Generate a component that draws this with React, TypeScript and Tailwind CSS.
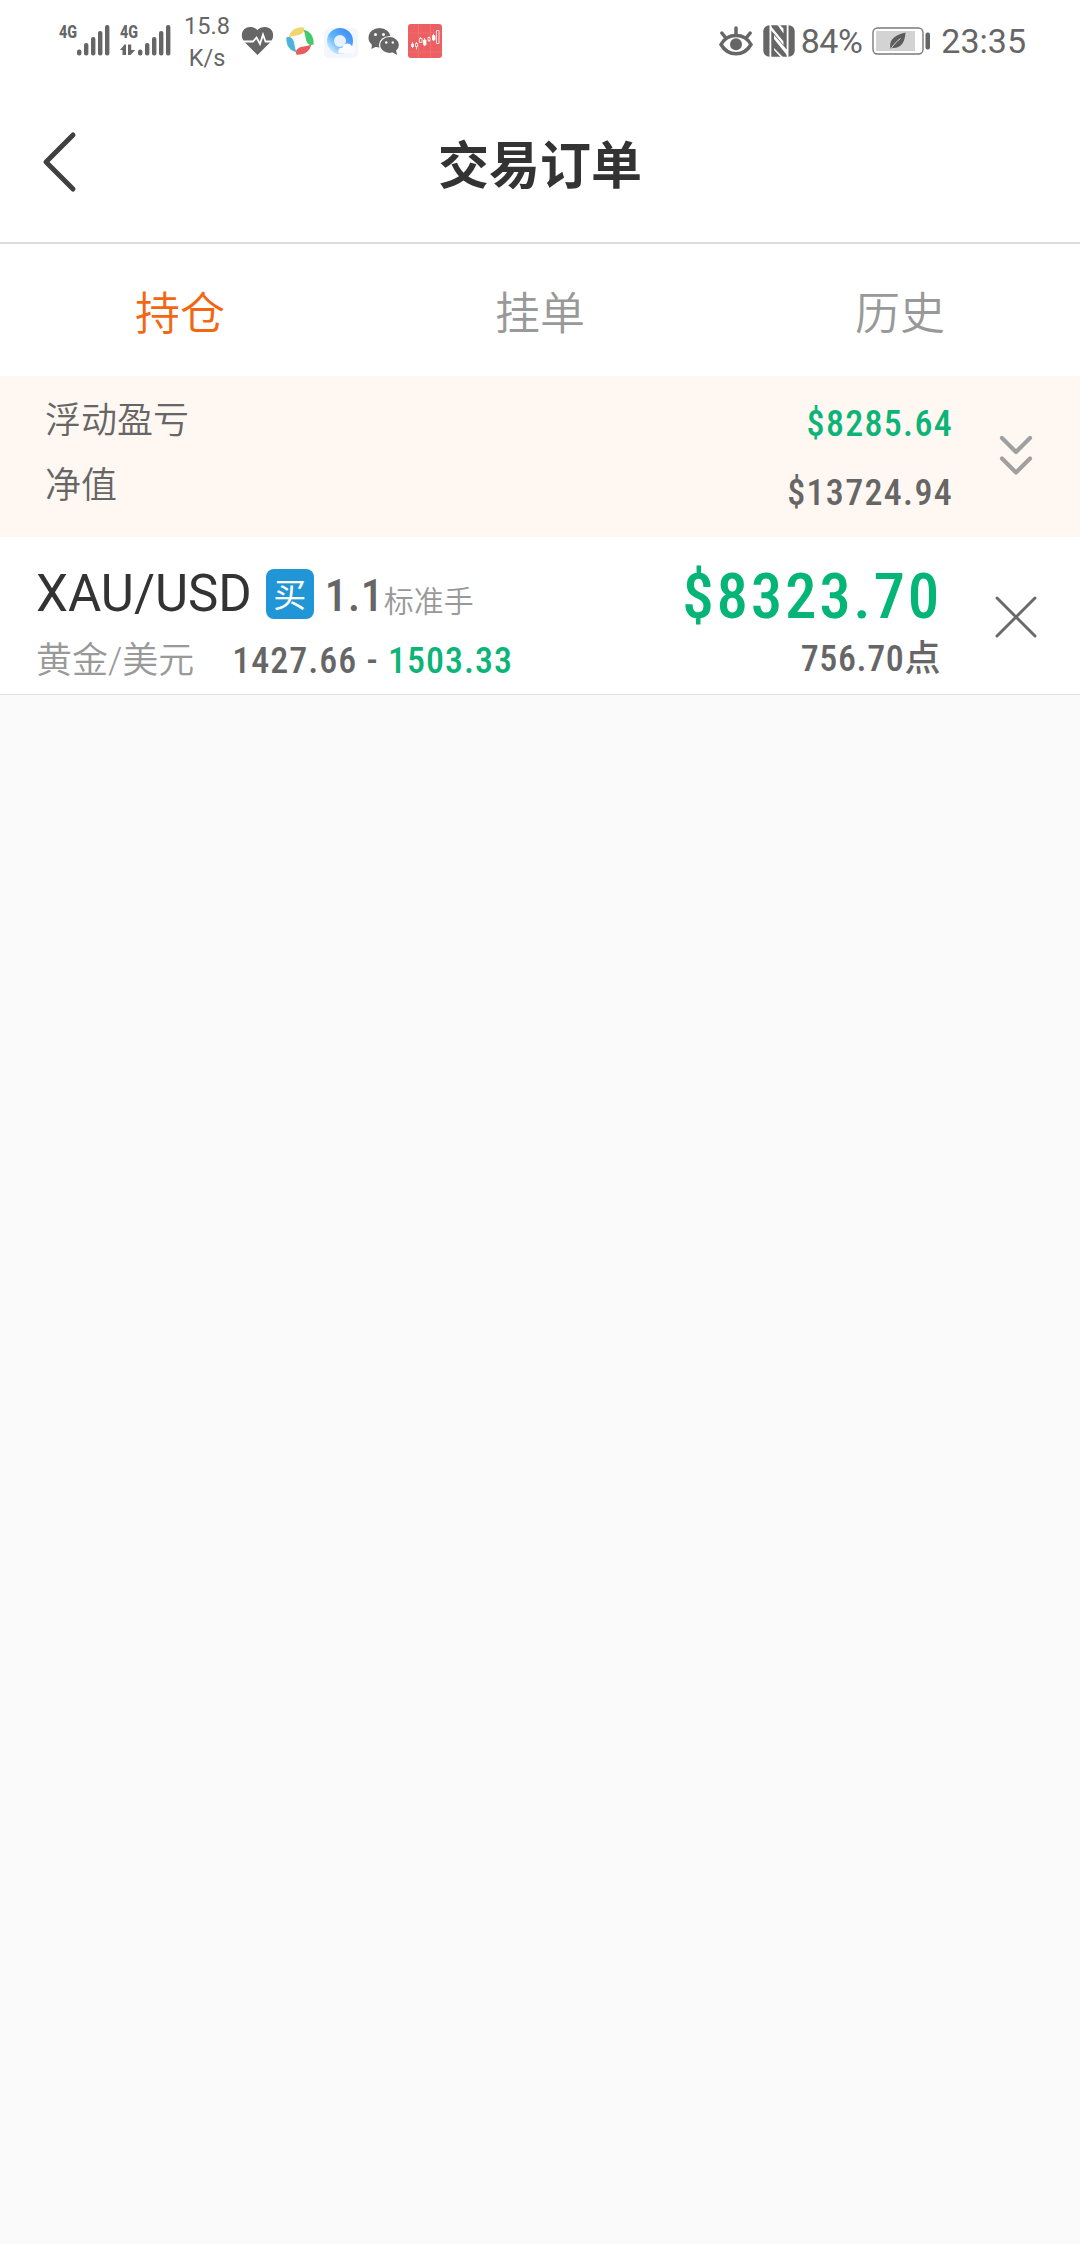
const tabs = ["持仓", "挂单", "历史"];

const signalBars = [
  { x: 21, y: 49.5 },
  { x: 28, y: 43 },
  { x: 35, y: 37 },
  { x: 42, y: 31 },
  { x: 49, y: 25 },
];

function Signal({ data = false }: { data?: boolean }) {
  return (
    <svg className="h-20 w-[61px] shrink-0 fill-[#666]" viewBox="0 0 61 80" aria-hidden="true">
      <text
        x="3"
        y="38"
        fontSize="18.5"
        fontWeight="800"
        textLength="18"
        lengthAdjust="spacingAndGlyphs"
        className="font-['Roboto',sans-serif]"
      >
        4G
      </text>
      {signalBars.map((bar) => (
        <rect key={bar.x} x={bar.x} y={bar.y} width="4.4" height={55.5 - bar.y} rx="2" />
      ))}
      {data && <path d="M3 50 7.500 44.500H9V55H5.500v-5zM11 44.500h3.200V50h4L13.500 55H11z" />}
    </svg>
  );
}

function HeartIcon() {
  return (
    <svg className="h-[30px] w-[33px] shrink-0" viewBox="0 0 33 30" aria-hidden="true">
      <path
        d="M16.500 29 3 15.500C-.5 11 .3 4.500 5 2c4-2.200 9-.8 11.500 2C19 1.200 24 .2 28 2c4.700 2.500 5.500 9 2 13.500z"
        fill="#666"
      />
      <path d="M0 15.500h12l3.500-4 3.500 6.500 3-9.500 2.500 7H33" fill="none" stroke="#fff" strokeWidth="1.8" />
    </svg>
  );
}

function PinwheelIcon() {
  return (
    <svg className="h-7 w-7 shrink-0" viewBox="0 0 28 28" aria-hidden="true">
      <path d="M2.800 10.500C4 4 9 0 17.500.3c1.500 4-.5 6.500-4.500 7.700-4 .8-7 1-10.200 2.500z" fill="#f0d66c" />
      <path d="M17.500 2.800C24 4 28 9 27.700 17.500c-4 1.500-6.500-.5-7.700-4.500-.8-4-1-7-2.500-10.200z" fill="#45c96c" />
      <path d="M25.200 17.500C24 24 19 28 10.500 27.700c-1.500-4 .5-6.500 4.500-7.700 4-.8 7-1 10.200-2.500z" fill="#e85d5c" />
      <path d="M10.500 25.200C4 24 0 19 .3 10.500c4-1.500 6.500.5 7.700 4.500.8 4 1 7 2.500 10.200z" fill="#52b1da" />
    </svg>
  );
}

function BrowserIcon() {
  return (
    <svg className="h-[30px] w-[34px] shrink-0" viewBox="0 0 34 30" aria-hidden="true">
      <defs>
        <linearGradient id="ring" x1="1" y1="0" x2="0" y2="1">
          <stop offset="0" stopColor="#3d8df5" />
          <stop offset=".6" stopColor="#62b7fb" />
          <stop offset="1" stopColor="#cdeafe" />
        </linearGradient>
      </defs>
      <rect width="34" height="30" rx="5" fill="#f3f6fc" />
      <circle cx="16" cy="13" r="9.500" fill="#e9f1fd" stroke="url(#ring)" strokeWidth="7" />
      <path d="M15 25.500c-2-3 0-6 3.500-6 1-5 8-5.500 9.500-1 4-1 5.500 5 1.500 7z" fill="#fafcff" />
    </svg>
  );
}

function WechatIcon() {
  return (
    <svg className="h-[27px] w-8 shrink-0" viewBox="0 0 32 27" aria-hidden="true">
      <ellipse cx="11.500" cy="9.700" rx="11" ry="9.700" fill="#666" />
      <path d="M4 15 3.500 21l6-3z" fill="#666" />
      <circle cx="7.500" cy="6.500" r="1.500" fill="#fff" />
      <circle cx="15.500" cy="6.500" r="1.500" fill="#fff" />
      <ellipse cx="21.500" cy="17" rx="10" ry="8.500" fill="#666" stroke="#fff" strokeWidth="1.200" />
      <path d="m24 24 5 3-1-5z" fill="#666" />
      <circle cx="18.300" cy="14.500" r="1.200" fill="#fff" />
      <circle cx="24.800" cy="14.500" r="1.200" fill="#fff" />
    </svg>
  );
}

function CandlesIcon() {
  return (
    <svg className="h-[34px] w-[34px] shrink-0" viewBox="0 0 34 34" aria-hidden="true">
      <rect width="34" height="34" rx="3" fill="#ec5f62" />
      <path d="M10.500 0v34M22.500 0v34M0 9h34M0 28h34" stroke="#f07477" strokeWidth=".8" />
      <g stroke="#fff" strokeWidth=".8" fill="none">
        <path d="M4.500 18v6M8.500 18v7.500M12.500 13v6M16.500 14v8M21 12.500V18M25.500 10v7" />
        <path d="M3.500 20h2v2.500h-2zM15.500 16h2.500v5h-2.500zM24.500 11.500H27V16h-2.500z" fill="#fff" />
        <path d="M7.500 19.500h2v3h-2zM11.500 14.500H14v4h-2.500zM20 13.500h2v3h-2zM28.500 6.500h2.500v13h-2.500z" fill="#ec5f62" />
      </g>
    </svg>
  );
}

function EyeIcon() {
  return (
    <svg className="h-[30px] w-[34px] shrink-0" viewBox="0 0 34 30" aria-hidden="true">
      <g fill="none" stroke="#666" strokeWidth="3.500" strokeLinecap="round">
        <path d="M17 2v6M2.800 7l3.700 4.500M31.200 7l-3.700 4.500" />
        <path d="M2 18.500C5.500 12 11 9.500 17 9.500s11.500 2.500 15 9c-3.500 6-9 9.300-15 9.300S5.500 24.500 2 18.500z" />
      </g>
      <circle cx="17" cy="18.300" r="6" fill="#666" />
    </svg>
  );
}

function NfcIcon() {
  return (
    <svg className="h-8 w-8 shrink-0" viewBox="0 0 32 32" aria-hidden="true">
      <rect x=".3" y=".3" width="31.400" height="31.400" rx="6" fill="#666" />
      <path d="M6.500 0v32h1.800V5.500L20.500 20v-3.500L9 2.500 8 0z" fill="#fff" />
      <path d="M25.500 32V0h-1.800v24.500L11 10v4L23 29l1 3z" fill="#fff" />
      <path d="M11 10v13l9 9h-2.500L11 25z" fill="#fff" />
      <path d="M20.500 20V8.500L14.500 0H17l3.500 3.500z" fill="#fff" />
    </svg>
  );
}

function BatteryIcon() {
  return (
    <svg className="h-7 w-[59px] shrink-0" viewBox="0 0 59 28" aria-hidden="true">
      <rect x="1" y="1" width="50" height="26" rx="4.500" fill="none" stroke="#7b7b7b" strokeWidth="1.400" />
      <rect x="4" y="4" width="39" height="20" fill="#d3d3d3" />
      <path d="M18.500 22c-1.500-8 2-13.500 15-16.500-.5 9-4 16-13 15.500z" fill="#5d5d5d" />
      <path d="M18.500 22.500c3-5 6-8 10-11" fill="none" stroke="#d3d3d3" strokeWidth="1" />
      <rect x="53.500" y="5.500" width="4.500" height="17" rx="2" fill="#666" />
    </svg>
  );
}

function StatusBar() {
  return (
    <div className="flex h-20 items-center pl-14 pr-[54px] font-['Roboto',sans-serif] text-[#666]">
      <Signal />
      <Signal data />
      <div className="ml-[5px] mt-[3px] w-12 text-center text-[23.5px] leading-8">
        <div>15.8</div>
        <div>K/s</div>
      </div>
      <div className="ml-[10px] mt-0.5 flex items-center">
        <HeartIcon />
        <div className="ml-3 flex">
          <PinwheelIcon />
        </div>
        <div className="ml-[10px] mt-1 flex">
          <BrowserIcon />
        </div>
        <div className="ml-[10px] flex">
          <WechatIcon />
        </div>
        <div className="ml-2 flex">
          <CandlesIcon />
        </div>
      </div>
      <div className="ml-auto mt-0.5 flex items-center">
        <EyeIcon />
        <div className="ml-[10px] flex">
          <NfcIcon />
        </div>
        <span className="ml-1.5 text-[34px] leading-none tracking-[-0.5px]">84%</span>
        <div className="ml-2.5 flex">
          <BatteryIcon />
        </div>
        <span className="ml-2.5 text-[34px] leading-none">23:35</span>
      </div>
    </div>
  );
}

function Header() {
  return (
    <header className="relative flex h-[164px] items-center justify-center border-b-2 border-[#dcdce0]">
      <button className="absolute left-[41px] top-[50px]" type="button" aria-label="返回">
        <svg className="h-[64px] w-9" viewBox="0 0 36 64" fill="none" aria-hidden="true">
          <path d="M32 5 5 32l27 27" stroke="#404040" strokeWidth="5" strokeLinecap="round" strokeLinejoin="round" />
        </svg>
      </button>
      <h1 className="pt-2.5 text-[51px] font-bold leading-none text-[#333]">交易订单</h1>
    </header>
  );
}

export default function App() {
  return (
    <div className="flex min-h-[2244px] w-[1080px] flex-col bg-[#fafafa] font-['Roboto','Noto_Sans_CJK_SC',sans-serif]">
      <div className="bg-white">
        <StatusBar />
        <Header />
        <nav className="grid h-[132px] grid-cols-3 text-[45px] font-[350]">
          {tabs.map((tab, i) => (
            <button key={tab} type="button" className={i === 0 ? "pt-2.5 text-[#f26711]" : "pt-2.5 text-[#999]"}>
              {tab}
            </button>
          ))}
        </nav>
      </div>

      <section className="flex h-[161px] items-start bg-[#fff8f2] pl-[45px] pr-[46px] text-[36px] text-[#666]">
        <div className="pt-[19px] font-[350] leading-[65px]">
          <div className="-mt-1.5">浮动盈亏</div>
          <div>净值</div>
        </div>
        <div className="-mr-0.5 ml-auto pt-3.5 text-right font-medium leading-[69px] tracking-[1.3px] font-stretch-condensed">
          <div className="text-[#0cb478]">$8285.64</div>
          <div>$13724.94</div>
        </div>
        <button className="ml-[47px] mt-[58px]" type="button" aria-label="展开">
          <svg className="h-[44px] w-9" viewBox="0 0 36 44" fill="none" aria-hidden="true">
            <path
              d="m4 4 14 14L32 4M4 24.500l14 14 14-14"
              stroke="#a0a0a0"
              strokeWidth="4.200"
              strokeLinecap="round"
              strokeLinejoin="round"
            />
          </svg>
        </button>
      </section>

      <section className="flex h-[158px] border-b border-[#e2e2e2] bg-white pl-9 pr-[40px]">
        <div>
          <div className="mt-[27px] flex h-[60px] items-center">
            <span className="text-[51px] text-[#333]">XAU/USD</span>
            <span className="ml-[14px] flex h-[50px] w-12 items-center justify-center rounded-lg bg-[#2196d6] pt-1 text-[33px] font-normal text-white">
              买
            </span>
            <span className="ml-[11px] mt-1 text-[45px] font-medium tracking-[0.5px] text-[#666] font-stretch-condensed">
              1.1
            </span>
            <span className="mt-3.5 text-[30px] font-[350] text-[#999]">标准手</span>
          </div>
          <div className="mt-[13px] flex h-12 items-center text-[36px]">
            <span className="font-[350] text-[#999]">黄金/美元</span>
            <span className="ml-[38px] whitespace-pre font-medium tracking-[1px] text-[#666] font-stretch-condensed">
              1427.66 - <span className="text-[#0cb478]">1503.33</span>
            </span>
          </div>
        </div>
        <div className="-mr-1 ml-auto text-right font-medium font-stretch-condensed">
          <div className="mt-[27px] h-[66px] text-[63px] leading-[66px] tracking-[2.7px] text-[#04b577]">$8323.70</div>
          <div className="mr-px mt-[5px] h-12 text-[36px] leading-[48px] tracking-[0.6px] text-[#666]">756.70点</div>
        </div>
        <button className="ml-[54px] mt-0.5 self-center" type="button" aria-label="平仓">
          <svg className="h-12 w-12" viewBox="0 0 48 48" aria-hidden="true">
            <path d="m5 5 38 38M43 5 5 43" stroke="#6a6a6a" strokeWidth="3" strokeLinecap="round" />
          </svg>
        </button>
      </section>
    </div>
  );
}
